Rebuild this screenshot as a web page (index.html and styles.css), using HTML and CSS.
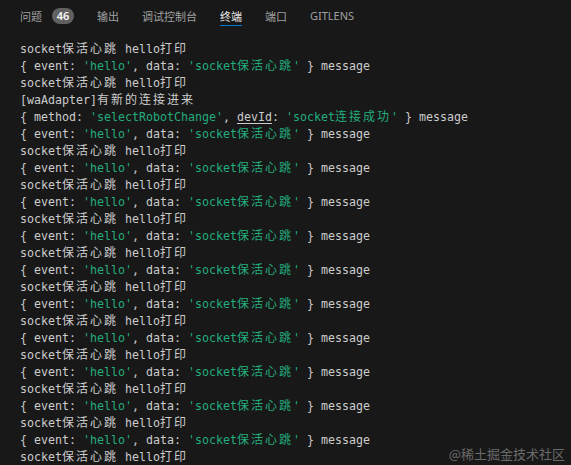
FILE: index.html
```html
<!DOCTYPE html>
<html lang="zh-CN">
<head>
    <meta charset="UTF-8">
    <meta name="viewport" content="width=device-width, initial-scale=1.0">
    <title>终端</title>
    <link rel="stylesheet" href="styles.css">
</head>
<body>
    <div class="panel">
        <div class="tabs">
            <div class="tab">问题<span class="badge">46</span></div>
            <div class="tab">输出</div>
            <div class="tab">调试控制台</div>
            <div class="tab active">终端</div>
            <div class="tab">端口</div>
            <div class="tab latin">GITLENS</div>
        </div>

        <div class="terminal" id="terminal">
            <div class="line">socket<span class="cn">保活心跳</span> hello<span class="cn">打印</span></div>
            <div class="line">{ event: <span class="str">'hello'</span>, data: <span class="str">'socket<span class="cn">保活心跳</span>'</span> } message</div>
            <div class="line">socket<span class="cn">保活心跳</span> hello<span class="cn">打印</span></div>
            <div class="line">[waAdapter]<span class="cn">有新的连接进来</span></div>
            <div class="line">{ method: <span class="str">'selectRobotChange'</span>, <u>devId</u>: <span class="str">'socket<span class="cn">连接成功</span>'</span> } message</div>
        </div>

        <div class="watermark">@稀土掘金技术社区</div>
    </div>

    <script>
        // the heartbeat pair repeats until the bottom of the panel
        const terminal = document.getElementById('terminal');
        const heartbeat = 'socket<span class="cn">保活心跳</span> hello<span class="cn">打印</span>';
        const message = '{ event: <span class="str">\'hello\'</span>, data: <span class="str">\'socket<span class="cn">保活心跳</span>\'</span> } message';

        for (let i = 0; i < 10; i++) {
            const msg = document.createElement('div');
            msg.className = 'line';
            msg.innerHTML = message;
            terminal.appendChild(msg);

            const beat = document.createElement('div');
            beat.className = 'line';
            beat.innerHTML = heartbeat;
            terminal.appendChild(beat);
        }
    </script>
</body>
</html>
```

FILE: styles.css
```css
body {
    margin: 0;
    background-color: #181818;
    overflow: hidden;
}

.panel {
    position: relative;
    height: 465px;
    overflow: hidden;
}

.tabs {
    display: flex;
    align-items: flex-start;
    gap: 23px;
    height: 39px;
    padding: 8px 20px 0;
    box-sizing: border-box;
    font-family: "Noto Sans CJK SC", "Noto Sans", sans-serif;
    font-size: 11px;
    color: #a0a0a0;
}

.tab {
    display: flex;
    align-items: center;
    gap: 10px;
    line-height: 16px;
    padding-bottom: 1px;
    border-bottom: 1px solid transparent;
}

.tab.active {
    color: #e7e7e7;
    border-bottom-color: #0078d4;
}

.tab.latin {
    font-family: "Noto Sans", sans-serif;
}

.badge {
    display: inline-flex;
    justify-content: center;
    align-items: center;
    width: 22px;
    height: 16px;
    border-radius: 8px;
    background-color: #616161;
    color: #f8f8f8;
    font-family: "Noto Sans", sans-serif;
    font-size: 11px;
    font-weight: 600;
}

.terminal {
    padding-left: 20px;
    font-family: "DejaVu Sans Mono", monospace;
    font-size: 11.63px;
    color: #cccccc;
}

.line {
    height: 17px;
    line-height: 17px;
    white-space: pre;
}

.cn {
    font-family: "Noto Sans CJK SC", sans-serif;
    font-size: 12px;
    letter-spacing: 2px;
}

.str {
    color: #23ad7d;
}

u {
    text-underline-offset: 2px;
}

.watermark {
    position: absolute;
    right: 6px;
    bottom: 2px;
    font-family: "Noto Sans CJK SC", sans-serif;
    font-size: 13px;
    color: #6a6a6a;
}
```
